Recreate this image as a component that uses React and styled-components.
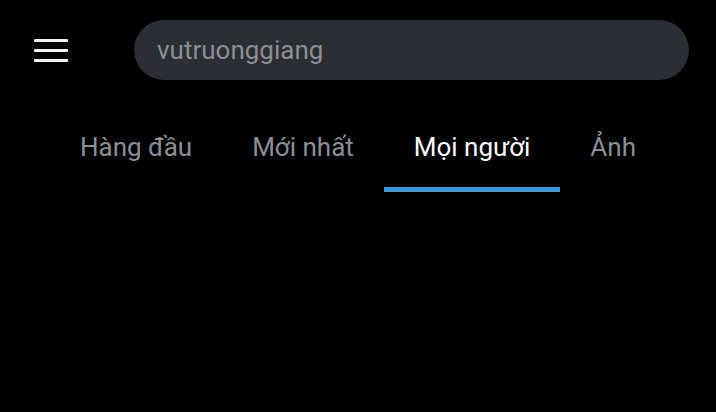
import React, { useState } from 'react';
import styled, { createGlobalStyle } from 'styled-components';

const GlobalStyle = createGlobalStyle`
    html, body {
        margin: 0;
        padding: 0;
        background: #000;
    }
    body {
        font-family: Roboto, "Noto Sans", Arial, sans-serif;
    }
`;

const Screen = styled.div`
    width: 716px;
    height: 412px;
    background: #000;
    overflow: hidden;
`;

const TopBar = styled.div`
    display: flex;
    align-items: center;
    padding: 20px 27px 0 34px;
    height: 60px;
`;

const MenuButton = styled.button`
    width: 34px;
    height: 23px;
    padding: 0;
    margin-right: 66px;
    border: none;
    background: transparent;
    display: flex;
    flex-direction: column;
    justify-content: space-between;
    cursor: pointer;
    span {
        display: block;
        height: 3px;
        border-radius: 1px;
        background: #f4f4f4;
    }
`;

const SearchBox = styled.div`
    flex: 1;
    height: 60px;
    border-radius: 30px;
    background: #2b2e32;
    display: flex;
    align-items: center;
    padding: 0 23px;
    font-size: 26px;
    color: #8b8f94;
`;

const Tabs = styled.div`
    display: flex;
    padding-left: 50px;
    margin-top: 40px;
`;

const Tab = styled.div`
    padding: 12px 30px 0;
    height: 72px;
    box-sizing: border-box;
    font-size: 26px;
    line-height: 30px;
    color: ${props => props.active ? '#ffffff' : '#8b9096'};
    border-bottom: 5px solid ${props => props.active ? '#3d95da' : 'transparent'};
    white-space: nowrap;
    cursor: pointer;
`;

const tabs = ['Hàng đầu', 'Mới nhất', 'Mọi người', 'Ảnh'];

const App = () => {
    const [active, setActive] = useState(2);

    return(
        <Screen>
            <GlobalStyle />
            <TopBar>
                <MenuButton>
                    <span /><span /><span />
                </MenuButton>
                <SearchBox>vutruonggiang</SearchBox>
            </TopBar>
            <Tabs>
                {tabs.map((tab, i) => (
                    <Tab key={tab} active={i === active ? 1 : 0} onClick={() => setActive(i)}>{tab}</Tab>
                ))}
            </Tabs>
        </Screen>
    );
}

export default App;
